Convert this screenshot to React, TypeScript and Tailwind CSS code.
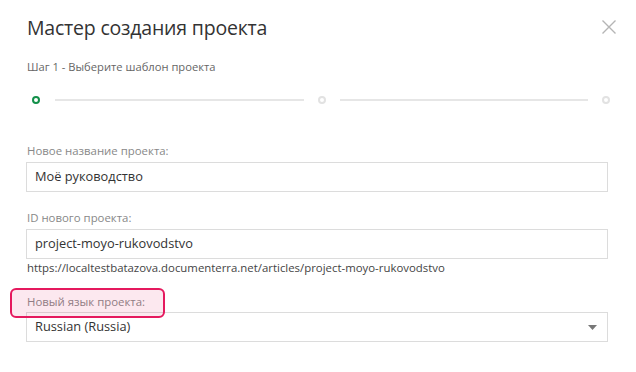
export default function App() {
  return (
    <div
      className="relative w-[636px] h-[372px] bg-white px-[26px] overflow-hidden"
      style={{ fontFamily: '"Open Sans", "Noto Sans", sans-serif' }}
    >
      {/* header */}
      <div className="flex items-start justify-between pt-[14px] pl-[1px]">
        <h1 className="text-[19.5px] leading-[28px] text-[#333] tracking-[-0.2px]">Мастер создания проекта</h1>
        <button className="mt-[6px] mr-[-6px] text-[#b5b5b5]" aria-label="Закрыть">
          <svg width="14" height="14" viewBox="0 0 14 14" fill="none" stroke="currentColor" strokeWidth="1.4">
            <path d="M0.5 0.5 L13.5 13.5 M13.5 0.5 L0.5 13.5" />
          </svg>
        </button>
      </div>

      <div className="mt-[17px] pl-[1px] text-[11.2px] leading-[16px] text-[#666]">
        Шаг 1 - Выберите шаблон проекта
      </div>

      {/* stepper */}
      <div className="mt-[21px] ml-[6px] w-[578px] flex items-center h-[8px]">
        <span className="w-[8px] h-[8px] rounded-full border-2 border-[#13904a]" />
        <span className="flex-1 h-[2px] bg-[#e6e6e6] ml-[15px] mr-[14px]" />
        <span className="w-[8px] h-[8px] rounded-full border-2 border-[#e2e2e2]" />
        <span className="flex-1 h-[2px] bg-[#e6e6e6] mx-[14px]" />
        <span className="w-[8px] h-[8px] rounded-full border-2 border-[#e2e2e2]" />
      </div>

      {/* name */}
      <label className="block mt-[39px] pl-[1px] text-[11.4px] leading-[16px] text-[#888]">
        Новое название проекта:
      </label>
      <div className="mt-[3px] w-[582px] h-[30px] border border-[#dcdcdc] flex items-center pl-[8px] text-[12.8px] text-[#333]">
        Моё руководство
      </div>

      {/* id */}
      <label className="block mt-[18px] pl-[1px] text-[11.4px] leading-[16px] text-[#888]">
        ID нового проекта:
      </label>
      <div className="mt-[3px] w-[582px] h-[30px] border border-[#dcdcdc] flex items-center pl-[8px] text-[12.8px] text-[#333]">
        project-moyo-rukovodstvo
      </div>
      <div className="mt-[1px] pl-[1px] text-[11.4px] leading-[16px] text-[#444]">
        https://localtestbatazova.documenterra.net/articles/project-moyo-rukovodstvo
      </div>

      {/* language */}
      <label className="block mt-[18px] pl-[1px] text-[11.4px] leading-[16px] text-[#888]">
        Новый язык проекта:
      </label>
      <div className="mt-[2px] w-[582px] h-[30px] border border-[#dcdcdc] flex items-center justify-between pl-[8px] pr-[10px] text-[12.8px] text-[#333]">
        <span>Russian (Russia)</span>
        <svg width="9" height="5" viewBox="0 0 9 5" className="text-[#777]">
          <path d="M0 0 H9 L4.5 5 Z" fill="currentColor" />
        </svg>
      </div>

      {/* highlight */}
      <div className="absolute left-[10px] top-[288px] w-[155px] h-[30px] rounded-[6px] border-2 border-[#e5195e] bg-[#e5195e]/10" />
    </div>
  );
}
